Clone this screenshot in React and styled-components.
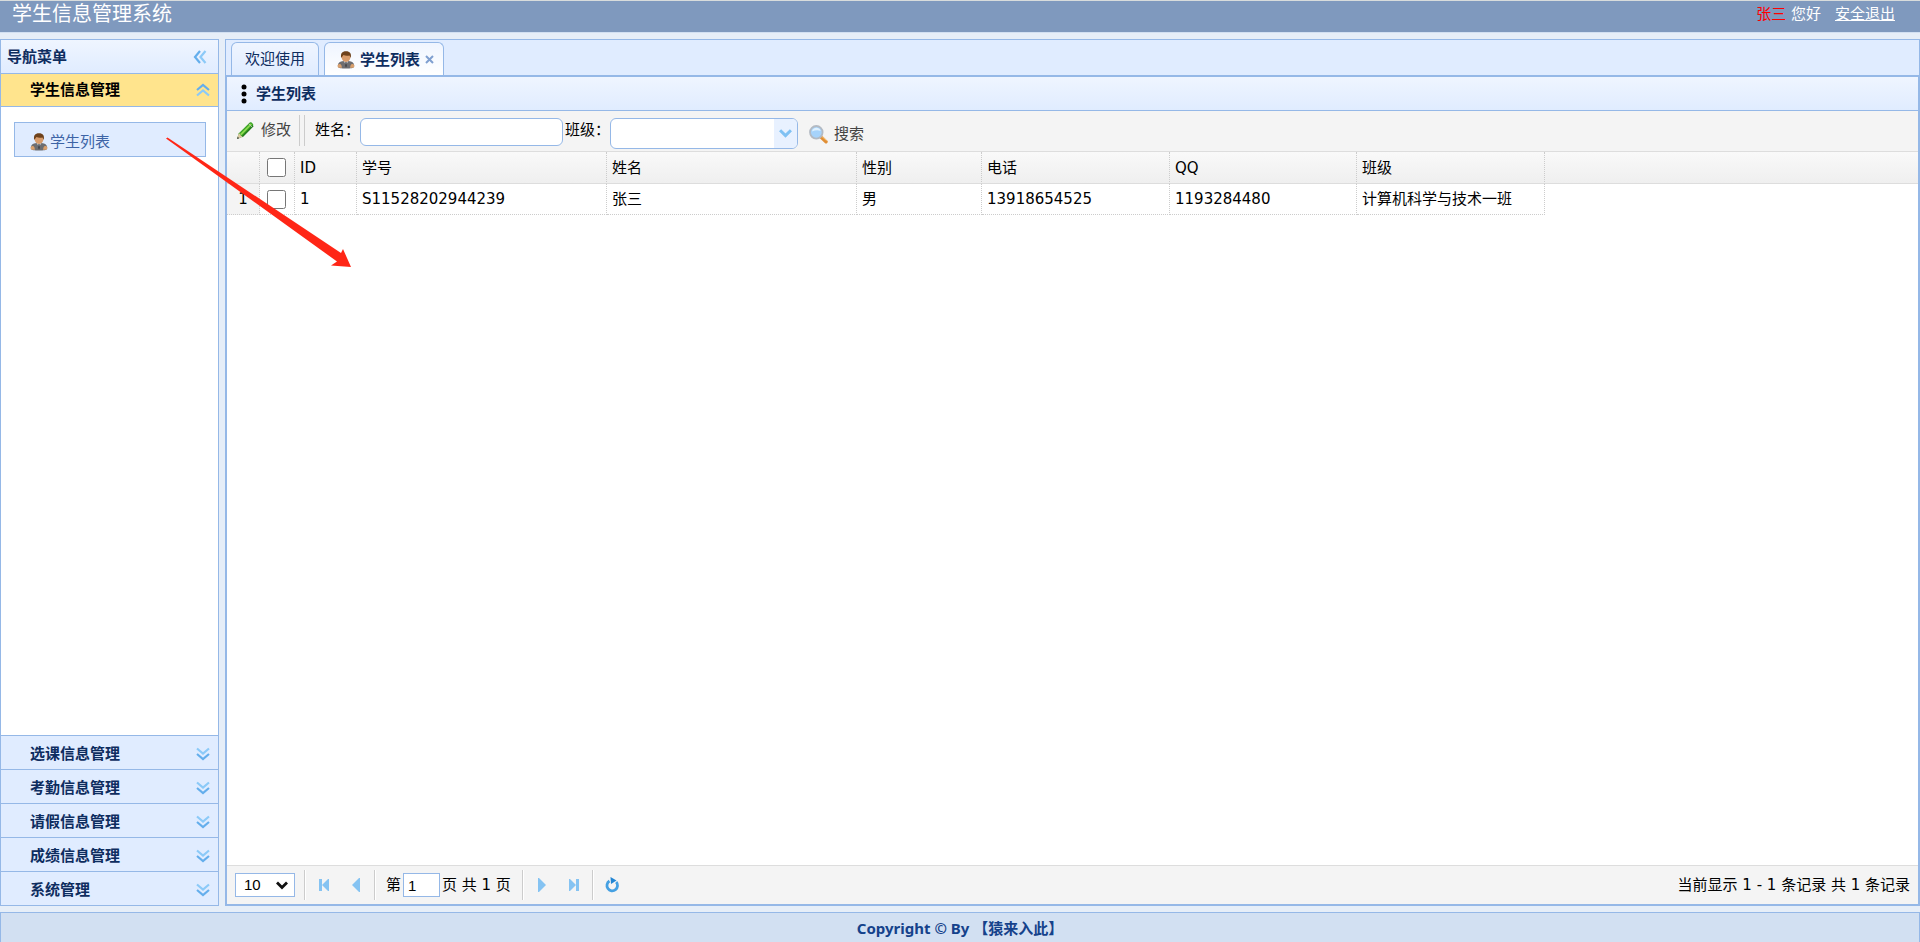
import React from 'react';
import styled, { createGlobalStyle, css } from 'styled-components';

const GlobalStyle = createGlobalStyle`
  :root {
    --border-color: #95b8e7;
    --line-color: #dddddd;
    --dotted-color: #cccccc;
    --panel-color: #e0ecff;
    --title-color: #0e2d5f;
    --toolbar-color: #f4f4f4;
  }
  * {
    box-sizing: border-box;
  }
  body {
    margin: 0;
    background: #e6eef8;
    color: #000;
    font-family: "DejaVu Sans", "Noto Sans CJK SC", sans-serif;
    font-size: 15px;
    line-height: 20px;
  }
  button, input, select {
    font: inherit;
    color: inherit;
  }
`;

const menus = ['选课信息管理', '考勤信息管理', '请假信息管理', '成绩信息管理', '系统管理'];

const columns = [
  { key: 'id', title: 'ID', width: 62 },
  { key: 'sn', title: '学号', width: 250 },
  { key: 'name', title: '姓名', width: 250 },
  { key: 'sex', title: '性别', width: 125 },
  { key: 'mobile', title: '电话', width: 188 },
  { key: 'qq', title: 'QQ', width: 187 },
  { key: 'clazz', title: '班级', width: 188 },
];

const students = [
  {
    id: 1,
    sn: 'S11528202944239',
    name: '张三',
    sex: '男',
    mobile: '13918654525',
    qq: '1193284480',
    clazz: '计算机科学与技术一班',
  },
];

function UserIcon() {
  return (
    <svg width="18" height="18" viewBox="0 0 18 18" aria-hidden="true">
      <path d="M1 16c-.6-3 .6-5 3-5.600l5-.8 5 .8c2.400.6 3.600 2.600 3 5.600-1 1-3 1.500-8 1.500S2 17 1 16z" fill="#6d6d70" />
      <path d="M.8 14c.6-1.400 2.800-1.400 3.600.2L5 16.800H1.500C.6 16.200.4 15 .8 14zM17.200 14c-.6-1.400-2.800-1.400-3.600.2l-.6 2.600h3.500c.9-.6 1.100-1.800.7-2.800z" fill="#d9a06d" />
      <path d="M6.500 10h5L9 14z" fill="#c9cdd2" />
      <path d="M8.500 11h1l.5 4-1 1.500L8 15z" fill="#47474a" />
      <ellipse cx="9" cy="6" rx="4.400" ry="5" fill="#d99c6b" />
      <path d="M4.200 7C3.400 2.500 5 .3 9 .3s5.600 2.200 4.800 6.700L12.500 4.500C10 5 8 4.800 6.500 4L5.300 5.500z" fill="#6e421c" />
    </svg>
  );
}

function PencilIcon() {
  return (
    <svg width="19" height="19" viewBox="0 0 20 20" aria-hidden="true">
      <path d="M1 19l2-6L14.500 1.500c1.200-1 4.500 1.500 3.500 3.300L7 16.500z" fill="#3aa227" />
      <path d="M4.300 13.800L15.500 2.700l1.200 1L5.800 15z" fill="#8edb50" />
      <path d="M6.500 16.500L18 5" stroke="#237a1c" strokeWidth="1.600" fill="none" />
      <path d="M1 19l2-6 1.300.8.700 1.400 2 1.300z" fill="#dcc9a1" />
      <path d="M1 19l.8-2.500 1.700 1.600z" fill="#444" />
      <path d="M13.200 2.800l3.600 3.400" stroke="#b5c7b1" />
    </svg>
  );
}

function SearchIcon() {
  return (
    <svg width="19" height="19" viewBox="0 0 19 19" aria-hidden="true">
      <path d="M12 12l5 4.800" stroke="#e08e35" strokeWidth="3.400" strokeLinecap="round" />
      <path d="M13 11.500l4.500 4" stroke="#f8c77a" />
      <circle cx="7.300" cy="7.300" r="6.300" fill="#a6d3fb" stroke="#b3bac3" strokeWidth="1.800" />
      <path d="M3 6.500c.5-4.500 7.500-5 8.700-.5-2.700-1-5.500-.8-8.700.5z" fill="#dff1ff" />
    </svg>
  );
}

function DoubleChevron({ turn = 0 }) {
  return (
    <svg width="14" height="14" viewBox="0 0 14 14" fill="none" aria-hidden="true">
      <g transform={`rotate(${turn} 7 7)`} strokeWidth="2.200">
        <path d="M1 1.500l6 5 6-5" stroke="#8ccaf8" />
        <path d="M1 7l6 5 6-5" stroke="#64aeec" />
      </g>
    </svg>
  );
}

function Chevron({ color, size = 12 }) {
  return (
    <svg width={size} height="9" viewBox="0 0 12 8" fill="none" aria-hidden="true">
      <path d="M1 1l5 5 5-5" stroke={color} strokeWidth="2.800" />
    </svg>
  );
}

function PageIcon({ flip, bar }) {
  return (
    <svg width="12" height="14" viewBox="0 0 12 14" fill="#85c3f2" aria-hidden="true">
      <g transform={flip ? 'translate(12 0) scale(-1 1)' : undefined}>
        {bar && <path d="M1 1h3v12H1z" />}
        <path d={bar ? 'M11 1v12h-1L4 7l6-6z' : 'M10 0v14H9L2 7l7-7z'} />
      </g>
    </svg>
  );
}

function RefreshIcon() {
  return (
    <svg width="16" height="16" viewBox="0 0 16 16" fill="none" aria-hidden="true">
      <path d="M12.200 5A5.300 5.300 0 1 1 5.500 4" stroke="#45a0e2" strokeWidth="2.800" />
      <path d="M6.500 0l6 3.500L7 7z" fill="#2285d3" />
    </svg>
  );
}

function Sidebar() {
  return (
    <SidebarStyled>
      <SidebarTitle>
        导航菜单
        <IconButton type="button" aria-label="收起菜单">
          <DoubleChevron turn={90} />
        </IconButton>
      </SidebarTitle>
      <MenuButton type="button" $active aria-expanded="true">
        学生信息管理
        <DoubleChevron turn={180} />
      </MenuButton>
      <MenuBody>
        <MenuLink href="#students">
          <UserIcon />
          学生列表
        </MenuLink>
      </MenuBody>
      {menus.map((menu) => (
        <MenuButton type="button" key={menu} aria-expanded="false">
          {menu}
          <DoubleChevron />
        </MenuButton>
      ))}
    </SidebarStyled>
  );
}

function Toolbar() {
  return (
    <ToolbarStyled>
      <ToolButton type="button">
        <PencilIcon />
        修改
      </ToolButton>
      <Separators />
      <Field htmlFor="name">姓名：</Field>
      <NameInput id="name" type="text" />
      <Field htmlFor="clazz">班级：</Field>
      <Combo>
        <select id="clazz" />
        <ComboArrow>
          <Chevron color="#7fc1f3" size={13} />
        </ComboArrow>
      </Combo>
      <ToolButton type="button" $low>
        <SearchIcon />
        搜索
      </ToolButton>
    </ToolbarStyled>
  );
}

function StudentTable() {
  return (
    <Table>
      <colgroup>
        <col width="33" />
        <col width="35" />
        {columns.map((col) => <col key={col.key} width={col.width} />)}
        <col />
      </colgroup>
      <thead>
        <tr>
          <HeadCell />
          <HeadCell $center><input type="checkbox" aria-label="全选" /></HeadCell>
          {columns.map((col) => <HeadCell key={col.key} scope="col">{col.title}</HeadCell>)}
          <HeadCell $last />
        </tr>
      </thead>
      <tbody>
        {students.map((student, index) => (
          <tr key={student.id}>
            <Cell $number $center>{index + 1}</Cell>
            <Cell $center><input type="checkbox" aria-label={student.name} /></Cell>
            {columns.map((col) => <Cell key={col.key}>{student[col.key]}</Cell>)}
          </tr>
        ))}
      </tbody>
    </Table>
  );
}

function Pager() {
  return (
    <PagerStyled>
      <PageSize>
        <select aria-label="每页记录数" defaultValue="10">
          <option>10</option>
          <option>20</option>
          <option>50</option>
        </select>
        <Chevron color="#111" />
      </PageSize>
      <Divider />
      <PageButton type="button" aria-label="首页"><PageIcon bar /></PageButton>
      <PageButton type="button" aria-label="上一页"><PageIcon /></PageButton>
      <Divider />
      <PageLabel>
        第
        <input type="text" defaultValue="1" />
        页 共 1 页
      </PageLabel>
      <Divider />
      <PageButton type="button" aria-label="下一页"><PageIcon flip /></PageButton>
      <PageButton type="button" aria-label="末页"><PageIcon flip bar /></PageButton>
      <Divider />
      <PageButton type="button" aria-label="刷新"><RefreshIcon /></PageButton>
      <PageInfo>当前显示 1 - 1 条记录 共 1 条记录</PageInfo>
    </PagerStyled>
  );
}

function App() {
  return (
    <Page>
      <GlobalStyle />
      <Header>
        <h1>学生信息管理系统</h1>
        <UserBar>
          <span><b>张三</b> 您好</span>
          <a href="#logout">安全退出</a>
        </UserBar>
      </Header>
      <Body>
        <Sidebar />
        <Main>
          <Tabs>
            <Tab type="button">欢迎使用</Tab>
            <Tab type="button" $active>
              <UserIcon />
              学生列表
              <svg width="9" height="9" viewBox="0 0 9 9" aria-hidden="true">
                <path d="M1 1l7 7M8 1L1 8" stroke="#7f9fd0" strokeWidth="2" />
              </svg>
            </Tab>
          </Tabs>
          <Content>
            <PanelTitle>
              <svg width="6" height="20" viewBox="0 0 6 20" aria-hidden="true">
                <circle cx="3" cy="3" r="2.500" />
                <circle cx="3" cy="10" r="2.500" />
                <circle cx="3" cy="17" r="2.500" />
              </svg>
              学生列表
            </PanelTitle>
            <Toolbar />
            <StudentTable />
            <Pager />
          </Content>
        </Main>
      </Body>
      <Footer>Copyright © By 【猿来入此】</Footer>
      {/* pointer from the menu item to the list */}
      <Pointer width="186" height="131" viewBox="0 0 186 131" aria-hidden="true">
        <path d="M0 1.500L1.500.5 175 116l2-4 8 18-20-1.500 6-4z" fill="#ff2616" />
      </Pointer>
    </Page>
  );
}

const Page = styled.div`
  position: relative;
  display: flex;
  flex-direction: column;
  min-height: 100vh;
`;

const Header = styled.header`
  display: flex;
  justify-content: space-between;
  height: 33px;
  padding: 0 25px 0 12px;
  border-top: 1px solid #d8dcdc;
  border-bottom: 1px solid #d2e0f2;
  background: #7f99be;
  color: #fff;

  h1 {
    margin: 0;
    font-size: 20px;
    font-weight: 400;
    line-height: 26px;
  }
`;

const UserBar = styled.div`
  display: flex;
  gap: 14px;
  line-height: 26px;

  b {
    color: #f00;
    font-weight: 400;
  }
  a {
    color: #fff;
  }
`;

const Body = styled.div`
  display: flex;
  flex: 1;
  gap: 6px;
  padding: 6px 0;
`;

const SidebarStyled = styled.nav`
  display: flex;
  flex-direction: column;
  width: 219px;
  border: 1px solid var(--border-color);
  background: #fff;
`;

const titleStyle = css`
  background: linear-gradient(to bottom, #eff5ff, #e0ecff);
  color: var(--title-color);
  font-weight: 700;
`;

const SidebarTitle = styled.div`
  ${titleStyle}
  display: flex;
  align-items: center;
  justify-content: space-between;
  height: 33px;
  padding: 0 11px 0 6px;
`;

const IconButton = styled.button`
  display: flex;
  padding: 0;
  border: 0;
  background: none;
`;

const MenuButton = styled.button`
  display: flex;
  align-items: center;
  justify-content: space-between;
  height: 34px;
  padding: 2px 8px 0 29px;
  border: 0;
  border-top: 1px solid var(--border-color);
  background: var(--panel-color);
  color: var(--title-color);
  font-weight: 700;

  ${({ $active }) => $active && css`
    height: 33px;
    padding-top: 0;
    background: #ffe48d;
    color: #000;
  `}
`;

const MenuBody = styled.div`
  flex: 1;
  padding: 15px 12px 15px 13px;
  border-top: 1px solid var(--border-color);
`;

const MenuLink = styled.a`
  display: flex;
  align-items: center;
  gap: 2px;
  height: 35px;
  padding: 4px 15px 0;
  border: 1px solid var(--border-color);
  background: var(--panel-color);
  color: #3d64a6;
  text-decoration: none;
`;

const Main = styled.main`
  display: flex;
  flex: 1;
  flex-direction: column;
  min-width: 0;
`;

const Tabs = styled.div`
  display: flex;
  align-items: flex-end;
  gap: 5px;
  height: 36px;
  padding: 0 5px;
  border: 1px solid var(--border-color);
  border-bottom: 0;
  background: var(--panel-color);
`;

const Tab = styled.button`
  display: flex;
  align-items: center;
  gap: 5px;
  height: 33px;
  padding: 0 13px;
  border: 1px solid var(--border-color);
  border-bottom: 0;
  border-radius: 6px 6px 0 0;
  background: linear-gradient(to bottom, #eff5ff, #e0ecff);
  color: var(--title-color);

  ${({ $active }) => $active && css`
    height: 34px;
    margin-bottom: -1px;
    padding: 0 9px 0 12px;
    background: linear-gradient(to bottom, #eff5ff, #fff);
    font-weight: 700;
  `}
`;

const Content = styled.section`
  display: flex;
  flex: 1;
  flex-direction: column;
  border: 2px solid var(--border-color);
  background: #fff;
`;

const PanelTitle = styled.div`
  ${titleStyle}
  display: flex;
  align-items: center;
  gap: 9px;
  height: 34px;
  padding: 1px 14px 0;
  border-bottom: 1px solid var(--border-color);
`;

const ToolbarStyled = styled.div`
  display: flex;
  align-items: flex-start;
  height: 41px;
  padding: 4px 9px;
  border-bottom: 1px solid var(--line-color);
  background: var(--toolbar-color);
`;

const ToolButton = styled.button`
  display: flex;
  align-items: center;
  gap: 6px;
  height: 30px;
  margin-top: ${({ $low }) => ($low ? '4px' : '0')};
  padding: 0;
  border: 0;
  background: none;
  color: #444;
`;

const Separators = styled.span`
  width: 6px;
  height: 31px;
  margin: 0 10px 0 8px;
  border: 1px solid #ccc;
  border-width: 0 1px;
`;

const Field = styled.label`
  width: 45px;
  line-height: 31px;
  white-space: nowrap;
`;

const NameInput = styled.input`
  width: 203px;
  height: 28px;
  margin: 3px 2px 0 0;
  padding: 0 6px;
  border: 1px solid var(--border-color);
  border-radius: 6px;
  background: #fff;
`;

const Combo = styled.span`
  display: flex;
  width: 188px;
  height: 31px;
  margin: 3px 11px 0 0;
  border: 1px solid var(--border-color);
  border-radius: 6px;
  background: #fff;
  overflow: hidden;

  select {
    flex: 1;
    appearance: none;
    border: 0;
    background: none;
  }
`;

const ComboArrow = styled.span`
  display: flex;
  align-items: center;
  justify-content: center;
  width: 23px;
  background: #e8f1ff;
  pointer-events: none;
`;

const Table = styled.table`
  width: 100%;
  border-spacing: 0;
  table-layout: fixed;

  input {
    display: block;
    width: 19px;
    height: 19px;
    margin: 0 7px;
  }
`;

const cellStyle = css`
  padding: ${({ $center }) => ($center ? '0' : '0 5px')};
  border-right: 1px dotted var(--dotted-color);
  text-align: ${({ $center }) => ($center ? 'center' : 'left')};
  font-weight: 400;
`;

const HeadCell = styled.th`
  ${cellStyle}
  height: 32px;
  border-bottom: 1px solid var(--line-color);
  background: linear-gradient(to bottom, #f9f9f9, #efefef);
  ${({ $last }) => $last && 'border-right: 0;'}
`;

const Cell = styled.td`
  ${cellStyle}
  height: 31px;
  border-bottom: 1px dotted var(--dotted-color);
  background: ${({ $number }) => ($number ? '#f4f4f4' : '#fff')};
`;

const PagerStyled = styled.div`
  display: flex;
  align-items: center;
  height: 39px;
  margin-top: auto;
  padding: 0 8px;
  border-top: 1px solid var(--line-color);
  background: var(--toolbar-color);
`;

const PageSize = styled.span`
  display: flex;
  align-items: center;
  width: 60px;
  height: 24px;
  margin-right: 6px;
  padding-right: 6px;
  border: 1px solid var(--border-color);
  background: #fff;

  select {
    flex: 1;
    height: 22px;
    margin-right: -18px;
    padding: 0 8px;
    appearance: none;
    border: 0;
    background: none;
    font-family: "Liberation Sans", sans-serif;
  }
  svg {
    pointer-events: none;
  }
`;

const Divider = styled.span`
  width: 2px;
  height: 30px;
  margin: 0 3px;
  border-left: 1px solid #ccc;
  border-right: 1px solid #fff;
`;

const PageButton = styled.button`
  display: flex;
  align-items: center;
  justify-content: center;
  width: 30px;
  height: 30px;
  padding: 0;
  border: 0;
  background: none;

  & + & {
    margin-left: 2px;
  }
`;

const PageLabel = styled.label`
  display: flex;
  align-items: center;
  gap: 2px;
  margin: 0 8px 0 7px;

  input {
    width: 37px;
    height: 24px;
    padding: 0 4px;
    border: 1px solid var(--border-color);
    background: #fff;
    font-family: "Liberation Sans", sans-serif;
  }
`;

const PageInfo = styled.span`
  margin-left: auto;
`;

const Footer = styled.footer`
  height: 30px;
  border: 1px solid var(--border-color);
  border-bottom: 0;
  background: #d2e0f2;
  color: #15428b;
  font-family: "Noto Sans", "Noto Sans CJK SC", sans-serif;
  font-weight: 700;
  line-height: 30px;
  text-align: center;
`;

const Pointer = styled.svg`
  position: absolute;
  top: 137px;
  left: 166px;
  pointer-events: none;
`;

export default App;
